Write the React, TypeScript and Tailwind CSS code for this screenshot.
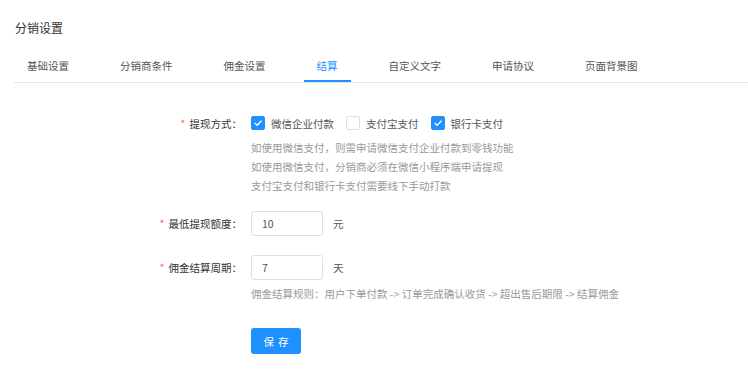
import { useState } from "react";

const tabs = ["基础设置", "分销商条件", "佣金设置", "结算", "自定义文字", "申请协议", "页面背景图"];

type Option = { key: string; label: string };

const payOptions: Option[] = [
  { key: "wechat", label: "微信企业付款" },
  { key: "alipay", label: "支付宝支付" },
  { key: "bank", label: "银行卡支付" },
];

function Checkbox({ checked, label, onToggle }: { checked: boolean; label: string; onToggle: () => void }) {
  return (
    <label className="flex cursor-pointer items-center" onClick={onToggle}>
      <span
        className={
          checked
            ? "flex h-[14px] w-[14px] items-center justify-center rounded-[2px] border border-[#1e90ff] bg-[#1e90ff]"
            : "h-[14px] w-[14px] rounded-[2px] border border-[#dcdfe6] bg-white"
        }
      >
        {checked && (
          <svg width="10" height="10" viewBox="0 0 10 10" fill="none">
            <path d="M2 5.2 4.2 7.3 8.2 3" stroke="white" strokeWidth="1.3" strokeLinecap="round" strokeLinejoin="round" />
          </svg>
        )}
      </span>
      <span className="ml-[6px] text-[#555]">{label}</span>
    </label>
  );
}

function FieldLabel({ text }: { text: string }) {
  return (
    <div className="flex w-[242px] shrink-0 items-center justify-end text-[#333]">
      <span className="mr-[4px] text-[#f56c6c]">*</span>
      {text}
    </div>
  );
}

export default function App() {
  const [active, setActive] = useState(3);
  const [pay, setPay] = useState<Record<string, boolean>>({ wechat: true, alipay: false, bank: true });
  const [minAmount, setMinAmount] = useState("10");
  const [cycle, setCycle] = useState("7");

  return (
    <div
      className="min-h-[385px] w-[748px] bg-white text-[10.5px] leading-[19px]"
      style={{ fontFamily: '"Noto Sans CJK SC", "Liberation Sans", sans-serif' }}
    >
      <div className="pl-[14px]">
        <div className="pl-px pt-[19px] text-[12px] leading-[17px] text-[#333]">分销设置</div>

        <div className="mt-[14px] flex gap-[25px] border-b border-[#e4e7ed]">
          {tabs.map((tab, i) => (
            <button
              key={tab}
              onClick={() => setActive(i)}
              className={
                i === active
                  ? "h-[32px] border-b-2 border-[#1e90ff] px-[13px] pt-[1px] text-[#1e90ff]"
                  : "h-[32px] border-b-2 border-transparent px-[13px] pt-[1px] text-[#555]"
              }
            >
              {tab}
            </button>
          ))}
        </div>
      </div>

      <div className="mt-[30px]">
        <div className="flex h-[20px] items-center">
          <FieldLabel text="提现方式：" />
          <div className="ml-[9px] flex items-center gap-[12px]">
            {payOptions.map((opt) => (
              <Checkbox
                key={opt.key}
                label={opt.label}
                checked={pay[opt.key]}
                onToggle={() => setPay({ ...pay, [opt.key]: !pay[opt.key] })}
              />
            ))}
          </div>
        </div>
        <div className="ml-[251px] mt-[5px] text-[#999]">
          <div>如使用微信支付，则需申请微信支付企业付款到零钱功能</div>
          <div>如使用微信支付，分销商必须在微信小程序端申请提现</div>
          <div>支付宝支付和银行卡支付需要线下手动打款</div>
        </div>

        <div className="mt-[16px] flex h-[25px] items-center">
          <FieldLabel text="最低提现额度：" />
          <input
            value={minAmount}
            onChange={(e) => setMinAmount(e.target.value)}
            className="ml-[9px] h-[25px] w-[72px] rounded-[3px] border border-[#dcdfe6] pl-[10px] text-[#555] outline-none"
          />
          <span className="ml-[10px] text-[#555]">元</span>
        </div>

        <div className="mt-[19px] flex h-[25px] items-center">
          <FieldLabel text="佣金结算周期：" />
          <input
            value={cycle}
            onChange={(e) => setCycle(e.target.value)}
            className="ml-[9px] h-[25px] w-[72px] rounded-[3px] border border-[#dcdfe6] pl-[10px] text-[#555] outline-none"
          />
          <span className="ml-[10px] text-[#555]">天</span>
        </div>
        <div className="ml-[251px] mt-[4px] text-[#999]">
          佣金结算规则：用户下单付款 -&gt; 订单完成确认收货 -&gt; 超出售后期限 -&gt; 结算佣金
        </div>

        <button className="ml-[251px] mt-[25px] flex h-[26px] w-[50px] items-center justify-center gap-[4px] rounded-[3px] bg-[#1e90ff] text-white">
          <span>保</span>
          <span>存</span>
        </button>
      </div>
    </div>
  );
}
